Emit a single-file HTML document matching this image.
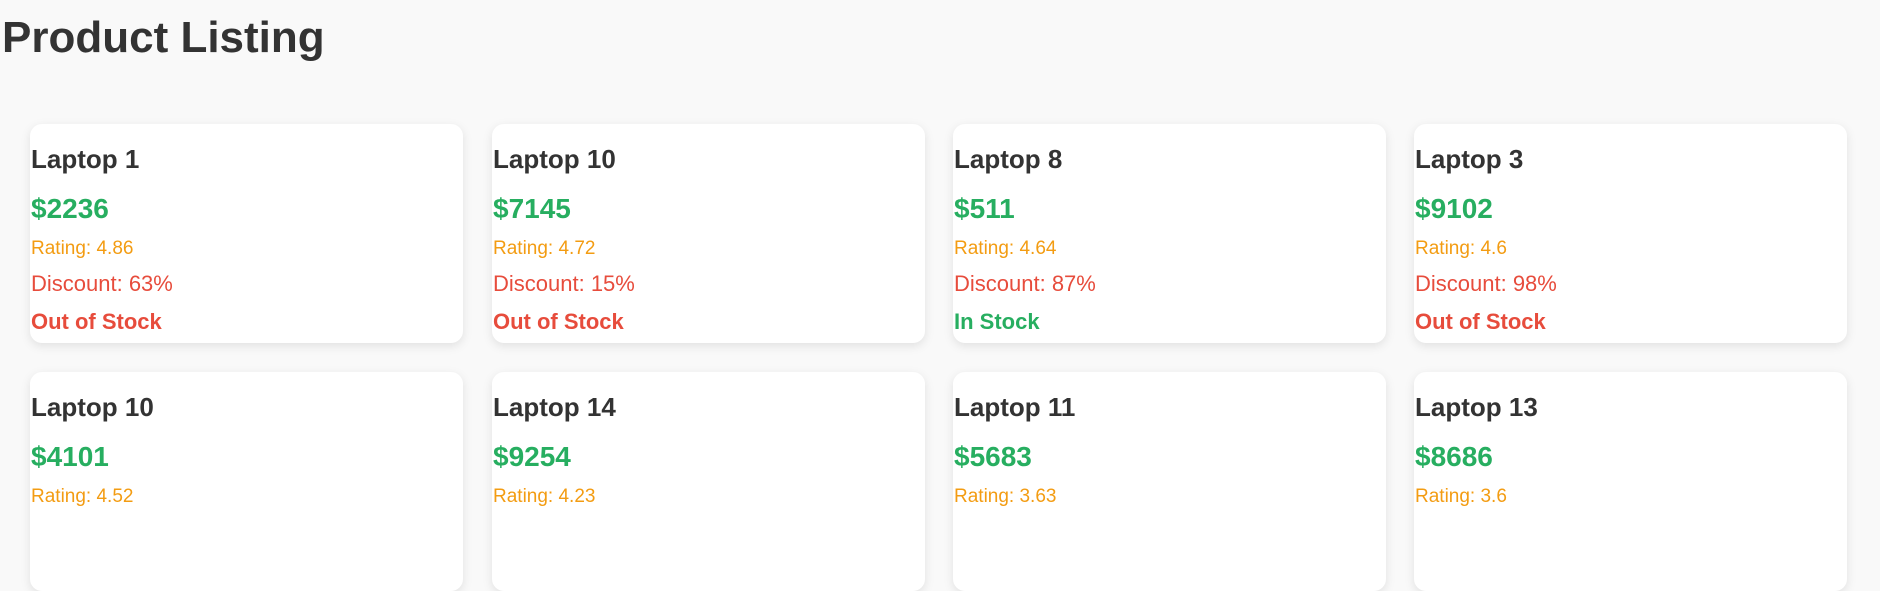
<!DOCTYPE html>
<html><head><meta charset="utf-8"><style>
*{margin:0;padding:0;box-sizing:border-box}
html,body{width:1880px;height:510px;overflow:hidden;background:#f9f9f9;font-family:"Liberation Sans",sans-serif}
h1{position:absolute;left:2px;top:16px;font-size:44px;line-height:44px;font-weight:bold;color:#333}
.c{position:absolute;width:433px;height:219px;background:#fff;border-radius:12px;box-shadow:0 3px 10px rgba(0,0,0,0.1)}
.c div{position:absolute;left:1px;white-space:nowrap;line-height:1}
.t{top:22px;font-size:26px;font-weight:bold;color:#333}
.p{top:71px;font-size:28px;font-weight:bold;color:#27ae60}
.r{top:115px;font-size:19px;color:#f39c12}
.d{top:149px;font-size:22px;color:#e74c3c}
.s{top:187px;font-size:22px;font-weight:bold}
.o{color:#e74c3c}.i{color:#27ae60}
</style></head><body>
<h1>Product Listing</h1>
<div class="c" style="left:30px;top:124px"><div class="t">Laptop 1</div><div class="p">$2236</div><div class="r">Rating: 4.86</div><div class="d">Discount: 63%</div><div class="s o">Out of Stock</div></div>
<div class="c" style="left:492px;top:124px"><div class="t">Laptop 10</div><div class="p">$7145</div><div class="r">Rating: 4.72</div><div class="d">Discount: 15%</div><div class="s o">Out of Stock</div></div>
<div class="c" style="left:953px;top:124px"><div class="t">Laptop 8</div><div class="p">$511</div><div class="r">Rating: 4.64</div><div class="d">Discount: 87%</div><div class="s i">In Stock</div></div>
<div class="c" style="left:1414px;top:124px"><div class="t">Laptop 3</div><div class="p">$9102</div><div class="r">Rating: 4.6</div><div class="d">Discount: 98%</div><div class="s o">Out of Stock</div></div>
<div class="c" style="left:30px;top:372px"><div class="t">Laptop 10</div><div class="p">$4101</div><div class="r">Rating: 4.52</div></div>
<div class="c" style="left:492px;top:372px"><div class="t">Laptop 14</div><div class="p">$9254</div><div class="r">Rating: 4.23</div></div>
<div class="c" style="left:953px;top:372px"><div class="t">Laptop 11</div><div class="p">$5683</div><div class="r">Rating: 3.63</div></div>
<div class="c" style="left:1414px;top:372px"><div class="t">Laptop 13</div><div class="p">$8686</div><div class="r">Rating: 3.6</div></div>
</body></html>
